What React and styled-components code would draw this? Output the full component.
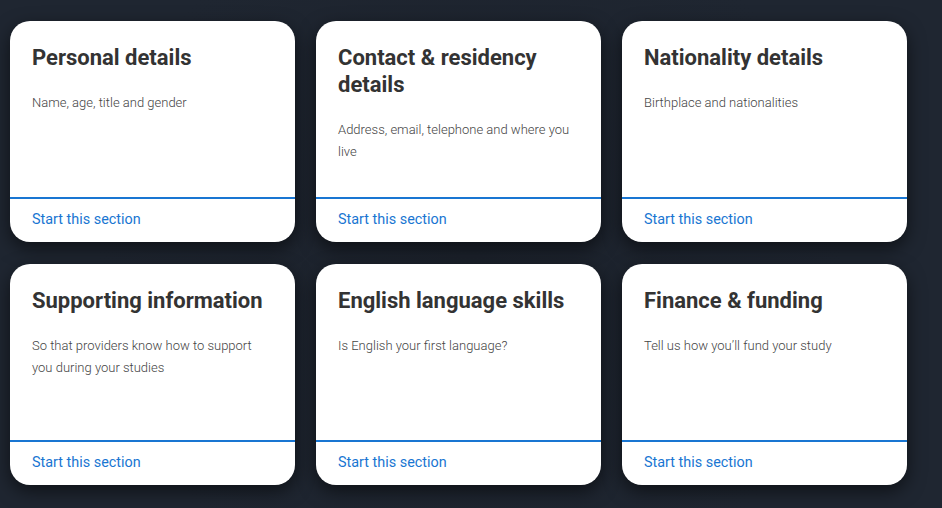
import React from "react";
import styled, { createGlobalStyle } from "styled-components";

const sections = [
  { title: "Personal details", text: "Name, age, title and gender" },
  { title: "Contact & residency details", text: "Address, email, telephone and where you live" },
  { title: "Nationality details", text: "Birthplace and nationalities" },
  { title: "Supporting information", text: "So that providers know how to support you during your studies" },
  { title: "English language skills", text: "Is English your first language?" },
  { title: "Finance & funding", text: "Tell us how you\u2019ll fund your study" },
];

export default function App() {
  return (
    <>
      <GlobalStyle />
      <Page>
        <Grid>
          {sections.map((s) => (
            <Card key={s.title}>
              <Body>
                <Title>{s.title}</Title>
                <Text>{s.text}</Text>
              </Body>
              <Footer>
                <Link href="#">Start this section</Link>
              </Footer>
            </Card>
          ))}
        </Grid>
      </Page>
    </>
  );
}

const GlobalStyle = createGlobalStyle`
  html, body {
    margin: 0;
    background: #1f2631;
  }
  body {
    font-family: Roboto, "Liberation Sans", sans-serif;
  }
`;

const Page = styled.div`
  width: 942px;
  height: 508px;
  background: radial-gradient(circle at 50% 50%, #1c222c 0%, #1f2631 70%);
  padding: 21px 0 0 10px;
  box-sizing: border-box;
  overflow: hidden;
`;

const Grid = styled.div`
  display: grid;
  grid-template-columns: repeat(3, 285px);
  column-gap: 21px;
  row-gap: 22px;
`;

const Card = styled.div`
  height: 221px;
  background: #fff;
  border-radius: 20px;
  box-shadow: 0 6px 18px rgba(0, 0, 0, 0.55);
  display: flex;
  flex-direction: column;
  overflow: hidden;
`;

const Body = styled.div`
  flex: 1;
  padding: 23px 22px 0;
`;

const Title = styled.h2`
  margin: 0;
  font-size: 22px;
  line-height: 27px;
  font-weight: 700;
  color: #333;
`;

const Text = styled.p`
  margin: 21px 0 0;
  font-size: 13px;
  line-height: 22px;
  font-weight: 300;
  color: #444;
`;

const Footer = styled.div`
  height: 45px;
  border-top: 2px solid #1976d2;
  display: flex;
  align-items: center;
  padding: 0 22px 3px;
  box-sizing: border-box;
`;

const Link = styled.a`
  font-size: 14.4px;
  color: #1976d2;
  text-decoration: none;
`;
